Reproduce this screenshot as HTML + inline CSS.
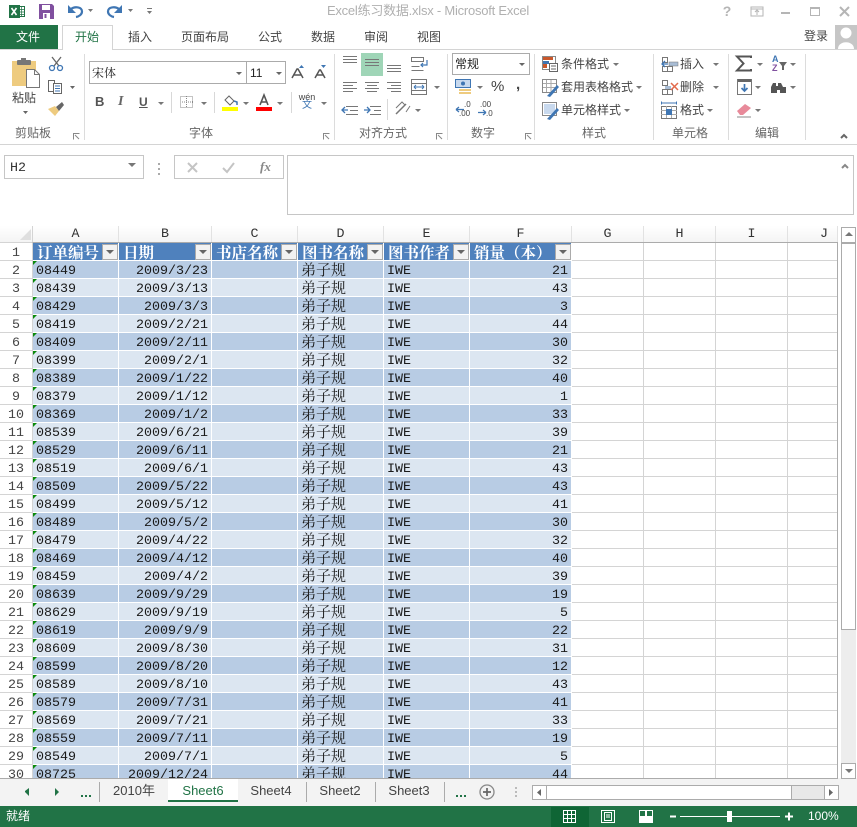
<!DOCTYPE html>
<html><head><meta charset="utf-8">
<style>
html,body{margin:0;padding:0;background:#fff}
body{width:857px;height:827px;position:relative;overflow:hidden;font-family:"Liberation Sans","Noto Sans CJK SC",sans-serif;font-size:12px;color:#444}
.t{position:absolute;white-space:nowrap;line-height:16px;height:16px}
.c{transform:translateX(-50%)}
.s{font-family:"Noto Serif CJK SC","Liberation Serif",serif}
.g{color:#666}
#grid{position:absolute;left:0;top:226px;width:838px;height:552px;overflow:hidden;background:#fff}
table{position:absolute;left:0;top:0;border-collapse:separate;border-spacing:0;table-layout:fixed;width:838px;font-family:"Liberation Mono","Noto Serif CJK SC",monospace;font-size:13.33px;color:#1a1a1a}
td{padding:4px 0 0;height:13px;line-height:13px;border-right:1px solid #d4d4d4;border-bottom:1px solid #d4d4d4;overflow:hidden;white-space:nowrap;box-sizing:content-box;position:relative;vertical-align:top}
tr.h td{height:14px;line-height:14px;padding-top:2px;border-right:1px solid #e2e2e2;border-bottom:1px solid #ababab;text-align:center;color:#333;background:linear-gradient(#fff,#f4f4f4)}
tr.h td:first-child{border-bottom-color:#d4d4d4;border-right-color:#d4d4d4}
td.n{text-align:center;background:#fff;color:#444}
tr:nth-child(odd) .x{background:#b8cce4}
tr:nth-child(even) .x{background:#dce6f1}
.x{border-right-color:#fff!important;border-bottom-color:#fff!important;padding-left:3px}
.r{text-align:right;padding-left:0;padding-right:3px}
.zh{font-family:"Noto Serif CJK SC",serif;font-size:15px;padding-top:1px;height:16px;line-height:16px}
tr.top .x{background:#4f81bd!important;color:#fff;font-family:"Noto Serif CJK SC",serif;font-weight:700;font-size:15.5px;padding-left:4px;padding-top:2px;height:15px;line-height:15px}
.tri{position:absolute;left:0;top:0;width:0;height:0;border-top:4px solid #0a8a0a;border-right:4px solid transparent}
.fb{position:absolute;right:0;top:1px;width:14px;height:14px;background:#f2f2f2;border:1px solid #ababab}
.fb:after{content:"";position:absolute;left:3px;top:5px;border-top:4px solid #666;border-left:4px solid transparent;border-right:4px solid transparent}
svg{position:absolute;left:0;top:0}
</style></head><body>

<div style="position:absolute;left:0;top:778px;width:857px;height:28px;background:#f3f3f3"></div>
<div style="position:absolute;left:0;top:806px;width:857px;height:21px;background:#217346"></div>
<div style="position:absolute;left:551px;top:807px;width:38px;height:20px;background:#0f6535"></div>
<div style="position:absolute;left:168px;top:778px;width:70px;height:24px;background:#fff;box-sizing:border-box;border-bottom:2px solid #217346"></div>
<div style="position:absolute;left:0;top:25px;width:58px;height:25px;background:#217346"></div>
<div style="position:absolute;left:361px;top:53px;width:22px;height:23px;background:#9fd5b7"></div>

<div id="grid">
<table>
<colgroup><col style="width:33px"><col style="width:86px"><col style="width:93px"><col style="width:86px"><col style="width:86px"><col style="width:86px"><col style="width:102px"><col style="width:72px"><col style="width:72px"><col style="width:72px"><col style="width:50px"></colgroup>
<tr class="h"><td></td><td>A</td><td>B</td><td>C</td><td>D</td><td>E</td><td>F</td><td>G</td><td>H</td><td>I</td><td style="text-align:left;padding-left:32px;width:17px">J</td></tr>
<tr class="top"><td class="n">1</td><td class="x">订单编号<i class="fb"></i></td><td class="x">日期<i class="fb"></i></td><td class="x">书店名称<i class="fb"></i></td><td class="x">图书名称<i class="fb"></i></td><td class="x">图书作者<i class="fb"></i></td><td class="x">销量（本）<i class="fb"></i></td><td></td><td></td><td></td><td></td></tr>
<tr><td class="n">2</td><td class="x"><i class="tri"></i>08449</td><td class="x r">2009/3/23</td><td class="x"></td><td class="x zh">弟子规</td><td class="x">IWE</td><td class="x r">21</td><td></td><td></td><td></td><td></td></tr>
<tr><td class="n">3</td><td class="x"><i class="tri"></i>08439</td><td class="x r">2009/3/13</td><td class="x"></td><td class="x zh">弟子规</td><td class="x">IWE</td><td class="x r">43</td><td></td><td></td><td></td><td></td></tr>
<tr><td class="n">4</td><td class="x"><i class="tri"></i>08429</td><td class="x r">2009/3/3</td><td class="x"></td><td class="x zh">弟子规</td><td class="x">IWE</td><td class="x r">3</td><td></td><td></td><td></td><td></td></tr>
<tr><td class="n">5</td><td class="x"><i class="tri"></i>08419</td><td class="x r">2009/2/21</td><td class="x"></td><td class="x zh">弟子规</td><td class="x">IWE</td><td class="x r">44</td><td></td><td></td><td></td><td></td></tr>
<tr><td class="n">6</td><td class="x"><i class="tri"></i>08409</td><td class="x r">2009/2/11</td><td class="x"></td><td class="x zh">弟子规</td><td class="x">IWE</td><td class="x r">30</td><td></td><td></td><td></td><td></td></tr>
<tr><td class="n">7</td><td class="x"><i class="tri"></i>08399</td><td class="x r">2009/2/1</td><td class="x"></td><td class="x zh">弟子规</td><td class="x">IWE</td><td class="x r">32</td><td></td><td></td><td></td><td></td></tr>
<tr><td class="n">8</td><td class="x"><i class="tri"></i>08389</td><td class="x r">2009/1/22</td><td class="x"></td><td class="x zh">弟子规</td><td class="x">IWE</td><td class="x r">40</td><td></td><td></td><td></td><td></td></tr>
<tr><td class="n">9</td><td class="x"><i class="tri"></i>08379</td><td class="x r">2009/1/12</td><td class="x"></td><td class="x zh">弟子规</td><td class="x">IWE</td><td class="x r">1</td><td></td><td></td><td></td><td></td></tr>
<tr><td class="n">10</td><td class="x"><i class="tri"></i>08369</td><td class="x r">2009/1/2</td><td class="x"></td><td class="x zh">弟子规</td><td class="x">IWE</td><td class="x r">33</td><td></td><td></td><td></td><td></td></tr>
<tr><td class="n">11</td><td class="x"><i class="tri"></i>08539</td><td class="x r">2009/6/21</td><td class="x"></td><td class="x zh">弟子规</td><td class="x">IWE</td><td class="x r">39</td><td></td><td></td><td></td><td></td></tr>
<tr><td class="n">12</td><td class="x"><i class="tri"></i>08529</td><td class="x r">2009/6/11</td><td class="x"></td><td class="x zh">弟子规</td><td class="x">IWE</td><td class="x r">21</td><td></td><td></td><td></td><td></td></tr>
<tr><td class="n">13</td><td class="x"><i class="tri"></i>08519</td><td class="x r">2009/6/1</td><td class="x"></td><td class="x zh">弟子规</td><td class="x">IWE</td><td class="x r">43</td><td></td><td></td><td></td><td></td></tr>
<tr><td class="n">14</td><td class="x"><i class="tri"></i>08509</td><td class="x r">2009/5/22</td><td class="x"></td><td class="x zh">弟子规</td><td class="x">IWE</td><td class="x r">43</td><td></td><td></td><td></td><td></td></tr>
<tr><td class="n">15</td><td class="x"><i class="tri"></i>08499</td><td class="x r">2009/5/12</td><td class="x"></td><td class="x zh">弟子规</td><td class="x">IWE</td><td class="x r">41</td><td></td><td></td><td></td><td></td></tr>
<tr><td class="n">16</td><td class="x"><i class="tri"></i>08489</td><td class="x r">2009/5/2</td><td class="x"></td><td class="x zh">弟子规</td><td class="x">IWE</td><td class="x r">30</td><td></td><td></td><td></td><td></td></tr>
<tr><td class="n">17</td><td class="x"><i class="tri"></i>08479</td><td class="x r">2009/4/22</td><td class="x"></td><td class="x zh">弟子规</td><td class="x">IWE</td><td class="x r">32</td><td></td><td></td><td></td><td></td></tr>
<tr><td class="n">18</td><td class="x"><i class="tri"></i>08469</td><td class="x r">2009/4/12</td><td class="x"></td><td class="x zh">弟子规</td><td class="x">IWE</td><td class="x r">40</td><td></td><td></td><td></td><td></td></tr>
<tr><td class="n">19</td><td class="x"><i class="tri"></i>08459</td><td class="x r">2009/4/2</td><td class="x"></td><td class="x zh">弟子规</td><td class="x">IWE</td><td class="x r">39</td><td></td><td></td><td></td><td></td></tr>
<tr><td class="n">20</td><td class="x"><i class="tri"></i>08639</td><td class="x r">2009/9/29</td><td class="x"></td><td class="x zh">弟子规</td><td class="x">IWE</td><td class="x r">19</td><td></td><td></td><td></td><td></td></tr>
<tr><td class="n">21</td><td class="x"><i class="tri"></i>08629</td><td class="x r">2009/9/19</td><td class="x"></td><td class="x zh">弟子规</td><td class="x">IWE</td><td class="x r">5</td><td></td><td></td><td></td><td></td></tr>
<tr><td class="n">22</td><td class="x"><i class="tri"></i>08619</td><td class="x r">2009/9/9</td><td class="x"></td><td class="x zh">弟子规</td><td class="x">IWE</td><td class="x r">22</td><td></td><td></td><td></td><td></td></tr>
<tr><td class="n">23</td><td class="x"><i class="tri"></i>08609</td><td class="x r">2009/8/30</td><td class="x"></td><td class="x zh">弟子规</td><td class="x">IWE</td><td class="x r">31</td><td></td><td></td><td></td><td></td></tr>
<tr><td class="n">24</td><td class="x"><i class="tri"></i>08599</td><td class="x r">2009/8/20</td><td class="x"></td><td class="x zh">弟子规</td><td class="x">IWE</td><td class="x r">12</td><td></td><td></td><td></td><td></td></tr>
<tr><td class="n">25</td><td class="x"><i class="tri"></i>08589</td><td class="x r">2009/8/10</td><td class="x"></td><td class="x zh">弟子规</td><td class="x">IWE</td><td class="x r">43</td><td></td><td></td><td></td><td></td></tr>
<tr><td class="n">26</td><td class="x"><i class="tri"></i>08579</td><td class="x r">2009/7/31</td><td class="x"></td><td class="x zh">弟子规</td><td class="x">IWE</td><td class="x r">41</td><td></td><td></td><td></td><td></td></tr>
<tr><td class="n">27</td><td class="x"><i class="tri"></i>08569</td><td class="x r">2009/7/21</td><td class="x"></td><td class="x zh">弟子规</td><td class="x">IWE</td><td class="x r">33</td><td></td><td></td><td></td><td></td></tr>
<tr><td class="n">28</td><td class="x"><i class="tri"></i>08559</td><td class="x r">2009/7/11</td><td class="x"></td><td class="x zh">弟子规</td><td class="x">IWE</td><td class="x r">19</td><td></td><td></td><td></td><td></td></tr>
<tr><td class="n">29</td><td class="x"><i class="tri"></i>08549</td><td class="x r">2009/7/1</td><td class="x"></td><td class="x zh">弟子规</td><td class="x">IWE</td><td class="x r">5</td><td></td><td></td><td></td><td></td></tr>
<tr><td class="n">30</td><td class="x"><i class="tri"></i>08725</td><td class="x r">2009/12/24</td><td class="x"></td><td class="x zh">弟子规</td><td class="x">IWE</td><td class="x r">44</td><td></td><td></td><td></td><td></td></tr>
</table>
</div>

<svg width="857" height="827" viewBox="0 0 857 827" fill="none">
<path d="M32.5 242.5H837.5V778.5H0" stroke="#ababab"/>
<path d="M20 240H31V229Z" fill="#dfdfdf"/>
<rect x="9" y="5" width="11" height="13" fill="#217346"/><rect x="18.5" y="6.5" width="6" height="10" stroke="#217346"/><path d="M19 9.5h5M19 12h5M19 14.5h5M21.5 7v9" stroke="#217346" stroke-width=".7"/><path d="M11.5 8l5 7M16.5 8l-5 7" stroke="#fff" stroke-width="1.6"/>
<path d="M39 4h13l2 2v13H39z" fill="#80509f"/><rect x="42" y="5" width="8" height="5" fill="#fff"/><rect x="43" y="13" width="7" height="6" fill="#fff"/><rect x="44.5" y="14" width="2" height="4" fill="#80509f"/>
<path d="M71 9c4-3 11-2 11 2.500 0 3-3 5-6 5.500" stroke="#3f76b3" stroke-width="2.200"/><path d="M68 5v8h8z" fill="#3f76b3"/>
<path d="M119 9c-4-3-11-2-11 2.500 0 3 3 5 6 5.500" stroke="#3f76b3" stroke-width="2.200"/><path d="M122 5v8h-8z" fill="#3f76b3"/>
<path d="M88 9h5l-2.500 3zM128 9h5l-2.500 3zM147 11h5l-2.500 3z" fill="#777"/><path d="M147 8.500h5" stroke="#777"/>
<rect x="751" y="7" width="12" height="9" stroke="#b5b5b5"/><path d="M751 9h12" stroke="#b5b5b5"/><path d="M757 15v-4M755 12l2-2 2 2" stroke="#b5b5b5"/>
<path d="M781 13h9" stroke="#b5b5b5" stroke-width="2"/>
<rect x="810.500" y="7.500" width="9" height="8" stroke="#b5b5b5"/><path d="M810 8h10" stroke="#b5b5b5" stroke-width="2"/>
<path d="M840 7l9 9M849 7l-9 9" stroke="#b5b5b5" stroke-width="2"/>
<rect x="835" y="25" width="22" height="24" fill="#c6c6c6"/><circle cx="846" cy="33" r="5.500" fill="#fff"/><path d="M838 49c0-9 16-9 16 0z" fill="#fff"/>
<path d="M0 49.500H62.500V25.500H112.500V49.500H857" stroke="#d4d4d4"/>
<path d="M0 144.500H857" stroke="#d4d4d4"/>
<path d="M84.500 54V140M334.500 54V140M447.500 54V140M534.500 54V140M653.500 54V140M728.500 54V140M805.500 54V140" stroke="#dcdcdc"/>
<rect x="12" y="61" width="24" height="25" fill="#eecb7f"/><rect x="17" y="60" width="14" height="5" rx="1" fill="#777"/><rect x="21" y="58" width="5" height="4" fill="#777"/>
<path d="M26.500 69.500h8l5 5v13h-13z" fill="#fff" stroke="#777"/><path d="M34.500 69.500v5h5" stroke="#777"/>
<path d="M23 111h5l-2.500 3z" fill="#666"/>
<path d="M52 57l7 9M61 57l-7 9" stroke="#666" stroke-width="1.300"/><circle cx="52" cy="68" r="2.500" stroke="#3f76b3" stroke-width="1.300"/><circle cx="60" cy="68" r="2.500" stroke="#3f76b3" stroke-width="1.300"/>
<path d="M48.500 80.500h6v11h-6z" stroke="#666"/><rect x="53.500" y="83.500" width="8" height="10" fill="#fff" stroke="#666"/><path d="M55 86h5M55 88.500h5M55 91h5" stroke="#3f76b3"/><path d="M70 86h5l-2.500 3z" fill="#666"/>
<path d="M48 109l7-3 4 5-4 5z" fill="#eecb7f"/><path d="M56 107l6-5 2 3-5 6z" fill="#666"/>
<path d="M73.500 139.500v-6h6M323.500 139.500v-6h6M436.500 139.500v-6h6M525.500 139.500v-6h6" stroke="#888"/>
<path d="M75 135l4 4M325 135l4 4M438 135l4 4M527 135l4 4" stroke="#888"/>
<rect x="89.500" y="61.500" width="196" height="22" stroke="#ababab"/><path d="M246.500 61v23" stroke="#ababab"/>
<path d="M236 72h6l-3 3zM276 72h6l-3 3z" fill="#666"/>
<path d="M292 78l5-9h1l5 9M294 75h7" stroke="#555" stroke-width="1.500"/><path d="M299 68l2.500-3 2.500 3z" fill="#3f76b3"/>
<path d="M315 78l4.500-8h1l4.500 8M317 75h6" stroke="#555" stroke-width="1.500"/><path d="M321 65l2.500 3 2.500-3z" fill="#3f76b3"/>
<path d="M171.500 92v21M214.500 92v21M291.500 92v21M387.500 99v21" stroke="#d8d8d8"/>
<path d="M158 101h6l-3 3zM201 101h6l-3 3zM243 101h6l-3 3zM277 101h6l-3 3zM321 101h6l-3 3zM415 108h6l-3 3zM434 85h6l-3 3z" fill="#777" transform="translate(0 1)"/>
<rect x="180.500" y="96.500" width="12" height="11" stroke="#888" stroke-dasharray="1 1"/><path d="M186.500 96v12M180 102h13" stroke="#888" stroke-dasharray="1 1"/>
<path d="M225 100l4-4 5 5-4 4z" stroke="#666" fill="#fff"/><path d="M234 101l3 1v3" stroke="#3f76b3" stroke-width="1.500"/><rect x="222" y="107" width="16" height="4" fill="#ff0"/>
<path d="M260 105l4-10 4 10M261.500 102h5" stroke="#555" stroke-width="1.600"/><rect x="256" y="107" width="16" height="4" fill="#f00"/>
<path d="M343 56.500h14M343 59.500h14M343 62.500h14M365 59.500h14M365 62.500h14M365 65.500h14M387 65.500h14M387 68.500h14M387 71.500h14" stroke="#777"/>
<path d="M343 82.500h14M343 85.500h10M343 88.500h14M343 91.500h10M365 82.500h14M367 85.500h10M365 88.500h14M367 91.500h10M387 82.500h14M391 85.500h10M387 88.500h14M391 91.500h10" stroke="#777"/>
<path d="M346 106.500h12M350 110.500h8M346 114.500h12M370 106.500h11M374 110.500h7M370 114.500h11" stroke="#777"/>
<path d="M342 110h6M345 107l-3 3 3 3" stroke="#3f76b3" stroke-width="1.300"/><path d="M364 110h6M367 107l3 3-3 3" stroke="#3f76b3" stroke-width="1.300"/>
<path d="M411.500 57.500h12v4h-12zM411.500 66.500h8M411.500 70.500h12" stroke="#777"/><path d="M427 60v5h-6M423 63l-2 2 2 2" stroke="#3f76b3" stroke-width="1.200"/>
<rect x="411.500" y="79.500" width="15" height="15" stroke="#777"/><path d="M411 83.500h16M411 90.500h16" stroke="#777"/><path d="M414 87h10M414 87l2-2M414 87l2 2M424 87l-2-2M424 87l-2 2" stroke="#3f76b3"/>
<path d="M396 114l10-10" stroke="#777" stroke-width="1.500"/><path d="M396 108l6-6 3 3M406 112l4-6" stroke="#777"/>
<rect x="452.500" y="53.500" width="77" height="21" stroke="#ababab"/><path d="M519 63h6l-3 3z" fill="#666"/>
<rect x="455.500" y="79.500" width="15" height="8" fill="#c8d9ee" stroke="#3f76b3"/><circle cx="463" cy="83.500" r="2" fill="#3f76b3"/><path d="M459 89h12v2h-12zM459 92h12v2h-12z" fill="#eecb7f"/><path d="M477 86h6l-3 3z" fill="#777"/>
<path d="M456 109.500h8M456 109.500l3-2.500M456 109.500l3 2.500M478 112.500h8M486 112.500l-3-2.500M486 112.500l-3 2.500" stroke="#3f76b3" stroke-width="1.200"/>
<rect x="542.500" y="56.500" width="13" height="13" stroke="#888"/><rect x="543" y="57" width="10" height="3" fill="#c9572b"/><rect x="543" y="61" width="6" height="3" fill="#3f76b3"/><rect x="543" y="64" width="4" height="4" fill="#c9572b"/><rect x="549.500" y="63.500" width="8" height="8" fill="#fff" stroke="#666"/><path d="M551 66h5M551 69h5" stroke="#666"/>
<rect x="542.500" y="79.500" width="14" height="13" stroke="#888"/><path d="M543 83.500h13M543 87.500h13M546.500 80v12M551 80v12" stroke="#aaa"/><path d="M547 96l10-11 2 2-9 10z" fill="#3f76b3"/>
<rect x="542.500" y="102.500" width="14" height="13" stroke="#888"/><rect x="544" y="104" width="11" height="10" fill="#c8d9ee"/><path d="M547 119l10-11 2 2-9 10z" fill="#3f76b3"/>
<path d="M613 63h6l-3 3zM636 86h6l-3 3zM624 109h6l-3 3zM713 63h6l-3 3zM713 86h6l-3 3zM707 109h6l-3 3zM757 63h6l-3 3zM790 63h6l-3 3zM755 86h6l-3 3zM790 86h6l-3 3zM755 109h6l-3 3z" fill="#777"/>
<path d="M662.500 57.500h5v5h-5zM662.500 66.500h5v5h-5zM667.500 66.500h5v5h-5z" stroke="#777"/><rect x="669" y="62" width="9" height="4" fill="#a9bdd5" stroke="#777" stroke-width=".5"/><path d="M662 64h6M665 61l-3 3 3 3" stroke="#3f76b3" stroke-width="1.300"/>
<path d="M662.500 80.500h5v5h-5zM662.500 89.500h5v5h-5zM667.500 89.500h5v5h-5z" stroke="#777"/><rect x="665" y="86" width="6" height="3" fill="#a9bdd5"/><path d="M671 83l7 7M678 83l-7 7" stroke="#e26a4c" stroke-width="1.500"/>
<rect x="661.500" y="106.500" width="15" height="12" stroke="#777"/><path d="M661 110.500h16M661 114.500h16M666.500 106v12M671.500 106v12" stroke="#aaa"/><rect x="666" y="109" width="6" height="6" fill="#3f76b3"/><path d="M662 103h14M661.500 101.500v3M676.500 101.500v3" stroke="#3f76b3"/>
<path d="M751 58v-1.500H737l6.500 7-6.500 7H751V69" stroke="#555" stroke-width="2"/>
<path d="M779 62h8l-3 4v4h-2v-4z" fill="#666"/>
<rect x="737.500" y="79.500" width="14" height="15" fill="#fff" stroke="#777"/><rect x="738" y="79" width="13" height="3" fill="#666"/><path d="M744.500 84v7M741.500 88l3 3 3-3" stroke="#3f76b3" stroke-width="1.700"/>
<path d="M771 93v-6l2-4h3v3h2v-3h3l2 4 3 0v6h-6v-3h-3v3z" fill="#555"/>
<path d="M737 111l8-7 6 4-8 7h-3z" fill="#e88a9a"/><path d="M737 117h14" stroke="#888"/>
<path d="M841 138l3-3 3 3" stroke="#666" stroke-width="2"/>
<rect x="4.500" y="155.500" width="139" height="23" stroke="#c6c6c6"/><path d="M128 163h8l-4 4z" fill="#777"/>
<path d="M159 163v2M159 168v2M159 173v2" stroke="#aaa" stroke-width="2"/>
<rect x="174.500" y="155.500" width="109" height="23" stroke="#c6c6c6"/>
<path d="M188 163l9 9M197 163l-9 9" stroke="#c4c4c4" stroke-width="2"/><path d="M223 168l4 4 7-9" stroke="#c4c4c4" stroke-width="2"/>
<rect x="287.500" y="155.500" width="566" height="59" stroke="#c6c6c6"/><path d="M842 168l3-3 3 3" stroke="#888" stroke-width="2"/>
<rect x="841" y="628" width="15" height="136" fill="#ededed"/>
<rect x="841.500" y="227.500" width="14" height="15" fill="#fff" stroke="#ababab"/><path d="M845 236h8l-4-4z" fill="#777"/>
<rect x="841.500" y="243.500" width="14" height="386" fill="#fff" stroke="#ababab"/>
<rect x="841.500" y="763.500" width="14" height="15" fill="#fff" stroke="#ababab"/><path d="M845 769h8l-4 4z" fill="#777"/>
<path d="M25 791l4-3v8l-4-4zM55 788l4 4-4 4z" fill="#217346"/>
<path d="M81 795h2v2h-2zM85 795h2v2h-2zM89 795h2v2h-2zM456 795h2v2h-2zM460 795h2v2h-2zM464 795h2v2h-2z" fill="#217346"/>
<path d="M99.500 782v20M306.500 782v20M375.500 782v20M444.500 782v20" stroke="#ababab"/>
<circle cx="487" cy="792" r="7" stroke="#888" stroke-width="1.300"/><path d="M483 792h8M487 788v8" stroke="#666" stroke-width="1.700"/>
<path d="M516 787v2M516 791v2M516 795v2" stroke="#bbb" stroke-width="2"/>
<rect x="532.500" y="785.500" width="306" height="14" fill="#e8e8e8" stroke="#ababab"/>
<rect x="532.500" y="785.500" width="14" height="14" fill="#fff" stroke="#ababab"/><path d="M541 789v7l-4-3.500z" fill="#666"/>
<rect x="546.500" y="785.500" width="245" height="14" fill="#fff" stroke="#ababab"/>
<rect x="824.500" y="785.500" width="14" height="14" fill="#fff" stroke="#ababab"/><path d="M829 789v7l4-3.500z" fill="#666"/>
<rect x="563.500" y="810.500" width="12" height="12" stroke="#fff"/><path d="M567.500 810v13M571.500 810v13M563 814.500h13M563 818.500h13" stroke="#fff"/>
<rect x="601.500" y="810.500" width="13" height="12" stroke="#fff"/><rect x="604.500" y="812.500" width="7" height="8" stroke="#fff"/><path d="M606 815h4M606 817h4" stroke="#fff"/>
<rect x="639.500" y="810.500" width="13" height="12" stroke="#fff"/><path d="M640 816h12v6h-12zM645 810h2v6h-2z" fill="#fff"/>
<path d="M670 816.500h6M785 816.500h8M789 812.500v8" stroke="#fff" stroke-width="2"/><path d="M680 816.500h100" stroke="#fff"/>
<rect x="727" y="811" width="5" height="11" fill="#fff"/>
</svg>

<div class="t c" style="left:428px;top:3px;font-size:13px;letter-spacing:-.23px;color:#b0b0b0">Excel练习数据.xlsx - Microsoft Excel</div>
<div class="t c" style="left:727px;top:3px;font-size:14px;font-weight:700;color:#b5b5b5">?</div>
<div class="t c" style="left:28px;top:29px;color:#fff">文件</div>
<div class="t c" style="left:87px;top:29px;color:#217346">开始</div>
<div class="t c" style="left:140px;top:29px">插入</div>
<div class="t c" style="left:205px;top:29px">页面布局</div>
<div class="t c" style="left:270px;top:29px">公式</div>
<div class="t c" style="left:323px;top:29px">数据</div>
<div class="t c" style="left:376px;top:29px">审阅</div>
<div class="t c" style="left:429px;top:29px">视图</div>
<div class="t" style="left:804px;top:28px">登录</div>
<div class="t" style="left:12px;top:90px">粘贴</div>
<div class="t s" style="left:92px;top:65px;color:#222">宋体</div>
<div class="t" style="left:250px;top:65px;color:#222">11</div>
<div class="t" style="left:95px;top:94px;font-weight:700;font-size:13px;color:#555">B</div>
<div class="t" style="left:118px;top:94px;font-style:italic;font-family:'Liberation Serif',serif;font-size:14px;font-weight:700;color:#666">I</div>
<div class="t" style="left:139px;top:94px;font-weight:700;text-decoration:underline;color:#555">U</div>
<div class="t c" style="left:307px;top:91px;font-size:9px;line-height:12px;height:12px">wén</div>
<div class="t c" style="left:307px;top:100px;font-size:10px;line-height:12px;height:12px;color:#3f76b3">文</div>
<div class="t" style="left:455px;top:56px;color:#222">常规</div>
<div class="t" style="left:491px;top:79px;font-size:15px">%</div>
<div class="t" style="left:516px;top:77px;font-size:15px;font-weight:700">,</div>
<div class="t" style="left:464px;top:100px;font-size:8px;line-height:9px;height:9px">.0</div>
<div class="t" style="left:459px;top:109px;font-size:8px;line-height:9px;height:9px">.00</div>
<div class="t" style="left:480px;top:100px;font-size:8px;line-height:9px;height:9px">.00</div>
<div class="t" style="left:486px;top:109px;font-size:8px;line-height:9px;height:9px">.0</div>
<div class="t" style="left:561px;top:56px">条件格式</div>
<div class="t" style="left:561px;top:79px">套用表格格式</div>
<div class="t" style="left:561px;top:102px">单元格样式</div>
<div class="t" style="left:680px;top:56px">插入</div>
<div class="t" style="left:680px;top:79px">删除</div>
<div class="t" style="left:680px;top:102px">格式</div>
<div class="t" style="left:772px;top:55px;font-size:9px;line-height:9px;height:9px;color:#3f76b3;font-weight:700">A</div>
<div class="t" style="left:772px;top:64px;font-size:9px;line-height:9px;height:9px;color:#80509f;font-weight:700">Z</div>
<div class="t c g" style="left:33px;top:125px">剪贴板</div>
<div class="t c g" style="left:201px;top:125px">字体</div>
<div class="t c g" style="left:383px;top:125px">对齐方式</div>
<div class="t c g" style="left:483px;top:125px">数字</div>
<div class="t c g" style="left:594px;top:125px">样式</div>
<div class="t c g" style="left:690px;top:125px">单元格</div>
<div class="t c g" style="left:767px;top:125px">编辑</div>
<div class="t" style="left:10px;top:161px;font-family:'Liberation Mono',monospace;font-size:13.33px;color:#333">H2</div>
<div class="t" style="left:260px;top:159px;font-family:'Liberation Serif',serif;font-style:italic;font-weight:700;font-size:13px;color:#888">fx</div>
<div class="t c" style="left:134px;top:783px;font-size:13px">2010年</div>
<div class="t c" style="left:203px;top:783px;font-size:13px;color:#217346">Sheet6</div>
<div class="t c" style="left:271px;top:783px;font-size:13px">Sheet4</div>
<div class="t c" style="left:340px;top:783px;font-size:13px">Sheet2</div>
<div class="t c" style="left:409px;top:783px;font-size:13px">Sheet3</div>
<div class="t" style="left:6px;top:808px;color:#fff">就绪</div>
<div class="t" style="left:808px;top:808px;color:#fff">100%</div>
</body></html>
